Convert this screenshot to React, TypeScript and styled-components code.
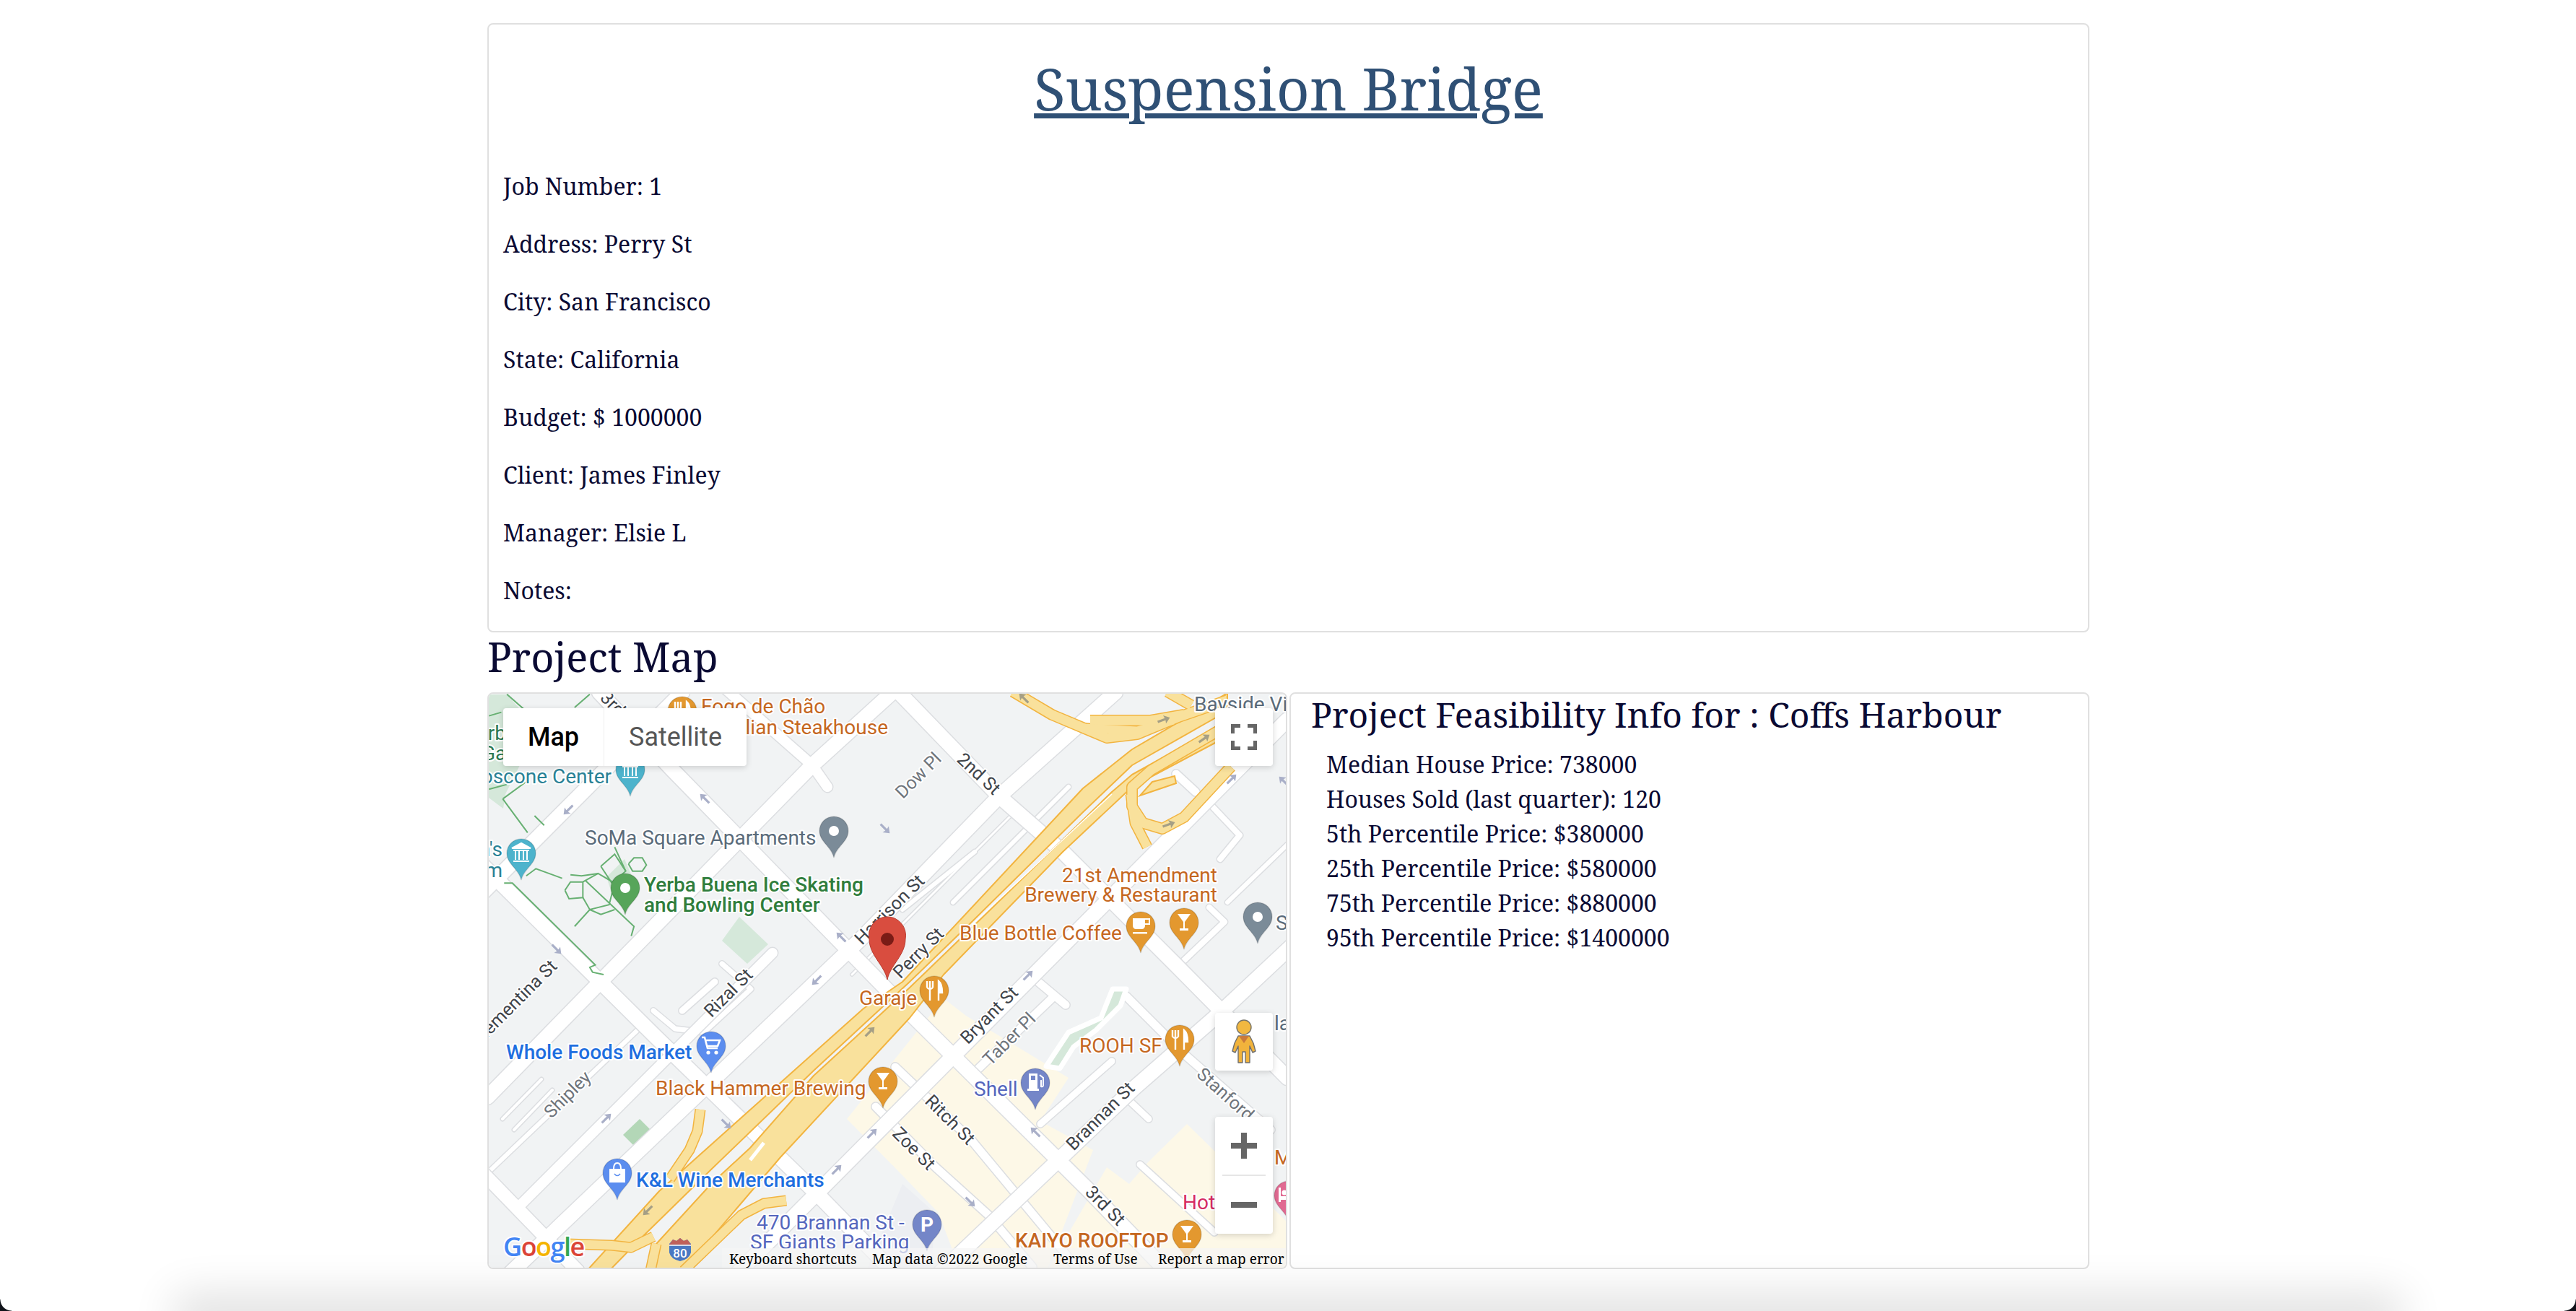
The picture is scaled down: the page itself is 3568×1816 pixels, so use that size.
import React from 'react'
import styled, { createGlobalStyle } from 'styled-components'

const serif = `"Noto Serif", "DejaVu Serif Condensed", "DejaVu Serif", serif`

const GlobalStyle = createGlobalStyle`
  html, body {
    margin: 0;
    padding: 0;
    background: #fff;
    overflow: hidden;
  }
  body {
    font-family: ${serif};
    color: #0a0a33;
  }
`

const Page = styled.div`
  position: relative;
  width: 3568px;
  height: 1816px;
  overflow: hidden;
  padding-top: 32px;
  box-sizing: border-box;
`
const Container = styled.div`
  width: 2219px;
  margin-left: 675px;
`
const Panel = styled.div`
  border: 2px solid #e0e0e0;
  border-radius: 8px;
  box-sizing: border-box;
  background: #fff;
`
const JobCard = styled(Panel)`
  height: 844px;
  padding: 0 20px;
`
const Title = styled.h1`
  margin: 0;
  height: 200px;
  padding-top: 33px;
  box-sizing: border-box;
  font-size: 80px;
  line-height: 110px;
  font-weight: 400;
  text-align: center;
  color: #2f5075;
  text-decoration: underline;
  text-decoration-thickness: 7px;
  text-underline-offset: 4px;
`
const Field = styled.p`
  margin: 0 0 32px;
  font-size: 32px;
  line-height: 48px;
`
const SectionTitle = styled.h2`
  margin: 0;
  height: 83px;
  font-size: 56px;
  line-height: 66px;
  font-weight: 400;
`
const Columns = styled.div`
  display: grid;
  grid-template-columns: 1108px 1108px;
  gap: 3px;
  height: 799px;
`
const MapPanel = styled(Panel)`
  position: relative;
  overflow: hidden;
`
const MapCanvas = styled.svg`
  display: block;
  width: 1104px;
  height: 795px;
  background: #f1f3f4;
`
const MapSwitch = styled.div`
  position: absolute;
  left: 20px;
  top: 20px;
  display: flex;
  height: 80px;
  border-radius: 4px;
  background: #fff;
  box-shadow: 0 2px 8px rgba(0, 0, 0, 0.16);
`
const SwitchTab = styled.div<{ $active?: boolean }>`
  display: flex;
  align-items: center;
  justify-content: center;
  width: ${({ $active }) => ($active ? '139px' : '197px')};
  font-family: Roboto, sans-serif;
  font-size: 36px;
  font-weight: ${({ $active }) => ($active ? 500 : 400)};
  color: ${({ $active }) => ($active ? '#000' : '#565656')};
  border-right: ${({ $active }) => ($active ? '1px solid #eee' : 'none')};
`
const ControlBox = styled.div`
  display: flex;
  align-items: center;
  justify-content: center;
  width: 80px;
  height: 80px;
  border-radius: 4px;
  background: #fff;
  box-shadow: 0 2px 8px rgba(0, 0, 0, 0.16);
`
const FullscreenBox = styled(ControlBox)`
  position: absolute;
  right: 18px;
  top: 20px;
`
const SideControls = styled.div`
  position: absolute;
  right: 18px;
  bottom: 47px;
  display: flex;
  flex-direction: column;
  gap: 64px;
`
const ZoomBox = styled(ControlBox)`
  height: 162px;
  flex-direction: column;
  justify-content: flex-start;
`
const ZoomButton = styled.div`
  display: flex;
  align-items: center;
  justify-content: center;
  width: 60px;
  height: 81px;
`
const ZoomDivider = styled.div`
  width: 60px;
  height: 2px;
  background: #e6e6e6;
`
const Attribution = styled.div`
  position: absolute;
  left: 323px;
  right: 0;
  bottom: 0;
  height: 27px;
  display: flex;
  align-items: center;
  box-sizing: border-box;
  padding: 3px 0 0 10px;
  background: rgba(245, 245, 245, 0.72);
  font-size: 19px;
  color: #000;
  white-space: nowrap;
`
const AttrItem = styled.span<{ $width: number }>`
  width: ${({ $width }) => $width}px;
  flex: none;
`
const InfoPanel = styled(Panel)`
  padding: 0 28px;
`
const InfoTitle = styled.h4`
  margin: 0;
  font-size: 48px;
  line-height: 57px;
  font-weight: 400;
`
const InfoList = styled.ul`
  margin: 17px 0 0;
  padding: 0 0 0 21px;
  list-style: none;
  font-size: 32px;
  line-height: 48px;
`
const BottomShade = styled.div`
  position: absolute;
  left: 270px;
  right: 270px;
  bottom: -14px;
  height: 10px;
  box-shadow: 0 0 60px 28px rgba(0, 0, 0, 0.12);
`
const Corner = styled.div<{ $right?: boolean }>`
  position: absolute;
  bottom: 0;
  ${({ $right }) => ($right ? 'right: 0;' : 'left: 0;')}
  width: 16px;
  height: 16px;
  background: radial-gradient(
    circle at ${({ $right }) => ($right ? '0 0' : '100% 0')},
    transparent 15px,
    #10131a 16px
  );
`

const Label = styled.text<{ $color: string; $weight?: number }>`
  font-family: Roboto, sans-serif;
  font-size: 28px;
  font-weight: ${({ $weight }) => $weight || 400};
  fill: ${({ $color }) => $color};
  stroke: #fff;
  stroke-width: 4px;
  stroke-linejoin: round;
  paint-order: stroke;
`
const RoadLabel = styled.text<{ $light?: boolean }>`
  font-family: Roboto, sans-serif;
  font-size: 25px;
  font-weight: 400;
  fill: ${({ $light }) => ($light ? '#6f757c' : '#3f444a')};
  stroke: #fff;
  stroke-width: 4px;
  stroke-linejoin: round;
  paint-order: stroke;
`
const GoogleMark = styled.text`
  font-family: "Open Sans", Roboto, sans-serif;
  font-size: 36px;
  font-weight: 600;
  letter-spacing: -1.5px;
  stroke: #fff;
  stroke-width: 4px;
  stroke-linejoin: round;
  paint-order: stroke;
`
const ShieldText = styled.text`
  font-family: Roboto, sans-serif;
  font-size: 17px;
  font-weight: 500;
  fill: #fff;
  text-anchor: middle;
`
const PinLetter = styled.text`
  font-family: Roboto, sans-serif;
  font-size: 28px;
  font-weight: 700;
  fill: #fff;
  text-anchor: middle;
`

const ORANGE = '#c5671f'
const BLUE = '#1f6fe0'
const PURPLE = '#5466bd'
const TEAL = '#2a8296'
const SLATE = '#5a6b7a'

// [d, width]
const ROADS: [string, number][] = [
  ['M640 1265L945 959', 20],
  ['M675 1520L1125 1060L1236 959', 20],
  ['M700 1770L955 1527L1196 1297L1384 1103L1545 959', 20],
  ['M1020 1765L1783 997', 20],
  ['M1300 1765L1571 1507L1690 1403L1800 1300', 20],
  ['M830 959L932 1067L1250 1393L1506 1647L1620 1765', 20],
  ['M1245 959L1384 1103L1472 1180L1629 1337L1783 1493', 20],
  ['M670 1200L909 1437L1135 1657L1240 1765', 20],
  ['M672 1628L800 1760', 18],
  ['M1000 950L1125 1060L1146 1090', 14],
  ['M720 1670L1070 1320', 14],
]
const MINOR_ROADS: [string, number][] = [
  ['M675 1625L885 1425', 6],
  ['M1240 1478L1284 1520L1346 1580L1468 1727L1490 1755', 11],
  ['M1213 1533L1296 1617L1369 1683L1430 1755', 11],
  ['M1560 1380L1640 1460L1760 1565', 11],
  ['M1345 1490L1460 1380', 11],
  ['M1441 1557L1540 1470', 9],
  ['M1556 1517L1591 1550', 9],
  ['M1579 1613L1682 1707', 9],
  ['M1629 1072L1656 1097', 11],
  ['M1679 1117L1717 1157L1690 1190', 8],
  ['M1675 1257L1696 1277L1633 1337', 8],
  ['M1426 1350L1476 1392', 11],
  ['M905 1400L935 1425L975 1430L1040 1370L1000 1335', 7],
  ['M990 1360L945 1400', 9],
  ['M696 1550L750 1495', 4],
  ['M712 1565L765 1510', 4],
  ['M1180 1350L1400 1130', 3],
  ['M1700 1250L1783 1170', 6],
  ['M1250 1260L1350 1180', 6],
  ['M1320 1250L1480 1090', 6],
]
const RAMPS: [string, number][] = [
  ['M1403 958L1457 990L1533 1022L1575 1017L1633 993L1700 970', 13],
  ['M1617 958L1650 977', 13],
  ['M1510 998L1594 998L1640 990', 13],
  ['M1500 1008L1575 1012L1625 998', 11],
  ['M1700 1005L1594 1067L1568 1090L1568 1117L1583 1140L1610 1148L1640 1132L1705 1062', 13],
  ['M1566 1100L1572 1140L1589 1173', 12],
  ['M970 1537L966 1567L955 1593L928 1633', 12],
  ['M1089 1663L1058 1667L1027 1683L947 1760', 12],
  ['M786 1723L847 1725L874 1728L905 1713', 12],
  ['M909 1723L901 1760', 12],
]
const TRUNK_UPPER =
  'M813 1760L913 1650L1196 1397L1250 1360L1500 1092L1568 1038L1633 1000L1700 960L1700 985L1568 1060L1500 1125L1346 1277L1260 1360L1127 1483L985 1620L890 1713L844 1760Z'
const TRUNK_LOWER =
  'M901 1760L909 1723L985 1640L1039 1590L1127 1490L1260 1368L1346 1285L1540 1097L1568 1073L1700 1000L1700 1020L1568 1090L1472 1180L1307 1350L1260 1410L1081 1603L947 1760Z'

// [x, y, angle] of the one way arrows, angle 0 points up
const ARROWS: [number, number, number][] = [
  [787, 1122, 225], [976, 1106, 315], [1226, 1148, 135], [771, 1315, 135],
  [1165, 1298, 315], [1131, 1358, 225], [840, 1549, 45], [1006, 1557, 135],
  [1208, 1570, 45], [1159, 1620, 45], [1434, 1568, 315], [1344, 1665, 135],
  [1706, 1079, 45], [1778, 1082, 315], [1424, 1351, 45],
]
const FREEWAY_ARROWS: [number, number, number][] = [
  [1418, 967, 315], [1612, 997, 70], [1668, 1023, 55], [1619, 1142, 70],
  [1205, 1429, 45], [897, 1677, 225],
]

const PIN_PATH = 'M0 0C-3 -15 -20 -22 -20 -37A20 20 0 1 1 20 -37C20 -22 3 -15 0 0Z'

const Pin = ({ x, y, color, children }: { x: number; y: number; color: string; children?: React.ReactNode }) => (
  <g transform={`translate(${x} ${y})`}>
    <path d={PIN_PATH} fill={color} stroke="rgba(0,0,0,0.12)" strokeWidth={1.5} />
    {children}
  </g>
)

const Dot = () => <circle cy={-37} r={7} fill="#fff" />
const Cutlery = () => (
  <g fill="none" stroke="#fff" strokeWidth={2.4}>
    <path d="M-10 -50v9M-6 -50v10M-2 -50v9M-10 -41q4 4 8 0M-6 -38v15" />
    <path d="M6 -23V-50q5 4 5 16h-5" fill="#fff" />
  </g>
)
const Glass = () => (
  <path d="M-9 -49H9L1 -38V-29H6V-26H-6V-29H-1V-38Z" fill="#fff" />
)
const Cup = () => (
  <g fill="#fff">
    <path d="M-11 -48H6V-38Q6 -33 1 -33H-6Q-11 -33 -11 -38Z" />
    <path d="M6 -47H12V-40H6" fill="none" stroke="#fff" strokeWidth={2} />
    <rect x={-11} y={-29} width={20} height={2.5} />
  </g>
)
const Cart = () => (
  <g>
    <path d="M-13 -49h4l4 15h14M-7 -45h19l-3 8h-14" fill="none" stroke="#fff" strokeWidth={2.6} />
    <circle cx={-4} cy={-28} r={2.6} fill="#fff" />
    <circle cx={7} cy={-28} r={2.6} fill="#fff" />
  </g>
)
const Bag = () => (
  <g>
    <rect x={-11} y={-43} width={22} height={19} fill="#fff" />
    <path d="M-5 -43q0 -8 5 -8t5 8" fill="none" stroke="#fff" strokeWidth={2} />
    <path d="M-4 -36q4 5 8 0" fill="none" stroke="#5b8def" strokeWidth={1.6} />
  </g>
)
const Museum = () => (
  <g fill="none" stroke="#fff" strokeWidth={2}>
    <path d="M-13 -44L0 -51L13 -44Z" fill="#fff" />
    <path d="M-11 -26H11M-8 -41V-28M-3 -41V-28M3 -41V-28M8 -41V-28M-11 -41H11" />
  </g>
)
const Fuel = () => (
  <g fill="#fff">
    <path d="M-9 -50H3V-29H5V-26H-11V-29H-9ZM-6 -47V-41H0V-47Z" fillRule="evenodd" />
    <path d="M6 -48L11 -44V-34Q11 -31 8 -32V-41" fill="none" stroke="#fff" strokeWidth={2} />
  </g>
)
const Bed = () => (
  <g fill="#fff">
    <rect x={-14} y={-48} width={3} height={20} />
    <rect x={-11} y={-36} width={24} height={5} />
    <circle cx={-6} cy={-41} r={3.5} />
    <rect x={-1} y={-44} width={14} height={8} />
  </g>
)

const Road = ({ z }: { z: [string, number][] }) => (
  <>
    {z.map(([d, w]) => (
      <path key={`c${d}`} d={d} fill="none" stroke="#dcdee1" strokeWidth={w + 3} strokeLinecap="round" strokeLinejoin="round" />
    ))}
    {z.map(([d, w]) => (
      <path key={d} d={d} fill="none" stroke="#fff" strokeWidth={w} strokeLinecap="round" strokeLinejoin="round" />
    ))}
  </>
)

const Arrow = ({ x, y, angle, color }: { x: number; y: number; angle: number; color: string }) => (
  <path
    transform={`translate(${x} ${y}) rotate(${angle})`}
    d="M0 -9L6 -1L1.6 -2L1.6 9L-1.6 9L-1.6 -2L-6 -1Z"
    fill={color}
  />
)

const StreetMap = () => (
  <MapCanvas viewBox="677 961 1104 795">
    {/* built up blocks */}
    <g fill="#fdf8e7">
      <path d="M1173 1550L1307 1383L1338 1407L1480 1493L1441 1553L1514 1593L1450 1760L1330 1760L1300 1680L1245 1623Z" />
      <path d="M1590 1610L1644 1557L1785 1695L1785 1760L1450 1760L1533 1617L1564 1640Z" />
    </g>
    <path d="M1250 1640L1295 1680L1290 1760L1200 1760Z" fill="#eceef2" />
    {/* parks */}
    <g fill="#d5e8da">
      <path d="M677 962L702 962L745 1010L700 1100L697 1120L677 1105Z" />
      <path d="M1000 1303L1024 1270L1064 1308L1035 1335Z" />
      <path d="M840 1215L865 1190L880 1225L850 1245Z" />
    </g>
    <path d="M863 1572L886 1550L901 1565L878 1587Z" fill="#b3d7b7" />
    <Road z={MINOR_ROADS} />
    <Road z={ROADS} />
    <path
      d="M1449 1477L1480 1430L1525 1410L1541 1370L1560 1370L1552 1393L1518 1427L1487 1450L1468 1480Z"
      fill="#d5e8da"
      stroke="#fff"
      strokeWidth={7}
      strokeLinejoin="round"
    />
    {/* trails round the gardens, in zoom crop units */}
    <g
      transform="translate(660 860) scale(0.3827 0.3333)"
      fill="none"
      stroke="#67b072"
      strokeWidth={2}
    >
      <path vectorEffect="non-scaling-stroke" d="M95 740L185 880M110 305L170 365M410 305L355 360M210 810L245 850M45 395L90 380M95 740L190 660M45 700L110 680" />
      <path vectorEffect="non-scaling-stroke" d="M100 1090L130 1090L430 1430L410 1440L420 1460L460 1470M180 1060L215 1030L310 1070M340 1055L380 1060L440 1050" />
      <path vectorEffect="non-scaling-stroke" d="M550 1010L570 985L600 985L615 1015L600 1040L565 1040L550 1010M450 1020L500 970L540 1040L490 1090L450 1020M320 1120L340 1085L385 1085L385 1150L335 1155L320 1120" />
      <path vectorEffect="non-scaling-stroke" d="M385 1085L440 1050L500 1090L480 1180L410 1200L385 1150M355 1270L410 1200L450 1220L500 1200M395 1080L570 1270L560 1310M500 940L540 1040" />
    </g>
    <g fill="#f9e19c" stroke="#f2b440" strokeWidth={2} strokeLinejoin="round">
      <path d={TRUNK_UPPER} />
      <path d={TRUNK_LOWER} />
    </g>
    {RAMPS.map(([d, w]) => (
      <path key={`o${d}`} d={d} fill="none" stroke="#f2b440" strokeWidth={w + 3} strokeLinejoin="round" />
    ))}
    {RAMPS.map(([d, w]) => (
      <path key={d} d={d} fill="none" stroke="#f9e19c" strokeWidth={w} strokeLinejoin="round" />
    ))}
    <path d="M1596 1083L1627 1075L1629 1085L1579 1102Z" fill="#f9e19c" stroke="#f2b440" strokeWidth={2} />
    <path d="M1039 1607L1058 1583" stroke="#fff" strokeWidth={5} />
    <path d="M1346 1281L1540 1100" stroke="#fff" strokeWidth={1.5} />
    {ARROWS.map(([x, y, a]) => (
      <Arrow key={`${x}${y}`} x={x} y={y} angle={a} color="#a9afc8" />
    ))}
    {FREEWAY_ARROWS.map(([x, y, a]) => (
      <Arrow key={`${x}${y}`} x={x} y={y} angle={a} color="#a59f85" />
    ))}

    {/* interstate shield */}
    <path d="M927 1723L932 1717L937 1719L942 1715L947 1719L952 1717L957 1723L957 1735Q955 1744 942 1747Q929 1744 927 1735Z" fill="#4a78c2" />
    <path d="M927 1724L932 1717L937 1719L942 1715L947 1719L952 1717L957 1724Z" fill="#c0605a" />
    <path d="M927 1725H957" stroke="#fff" strokeWidth={1.5} />
    <ShieldText x={942} y={1742}>80</ShieldText>

    <RoadLabel x={1350} y={1078} textAnchor="middle" transform="rotate(43 1350 1078)">2nd St</RoadLabel>
    <RoadLabel $light x={1278} y={1080} textAnchor="middle" transform="rotate(-45 1278 1080)">Dow Pl</RoadLabel>
    <RoadLabel x={1238} y={1266} textAnchor="middle" transform="rotate(-45 1238 1266)">Harrison St</RoadLabel>
    <RoadLabel x={1278} y={1326} textAnchor="middle" transform="rotate(-45 1278 1326)">Perry St</RoadLabel>
    <RoadLabel x={830} y={968} transform="rotate(45 830 968)">3rd St</RoadLabel>
    <RoadLabel x={1044} y={1352} textAnchor="end" transform="rotate(-45 1044 1352)">Rizal St</RoadLabel>
    <RoadLabel x={773} y={1340} textAnchor="end" transform="rotate(-45 773 1340)">Clementina St</RoadLabel>
    <RoadLabel $light x={792} y={1522} textAnchor="middle" transform="rotate(-45 792 1522)">Shipley</RoadLabel>
    <RoadLabel x={1376} y={1412} textAnchor="middle" transform="rotate(-45 1376 1412)">Bryant St</RoadLabel>
    <RoadLabel $light x={1404} y={1445} textAnchor="middle" transform="rotate(-45 1404 1445)">Taber Pl</RoadLabel>
    <RoadLabel x={1530} y={1552} textAnchor="middle" transform="rotate(-45 1530 1552)">Brannan St</RoadLabel>
    <RoadLabel x={1310} y={1557} textAnchor="middle" transform="rotate(45 1310 1557)">Ritch St</RoadLabel>
    <RoadLabel x={1260} y={1597} textAnchor="middle" transform="rotate(45 1260 1597)">Zoe St</RoadLabel>
    <RoadLabel x={1525} y={1676} textAnchor="middle" transform="rotate(45 1525 1676)">3rd St</RoadLabel>
    <RoadLabel $light x={1656} y={1490} transform="rotate(42 1656 1490)">Stanford St</RoadLabel>

    <Pin x={1155} y={1188} color="#7b8b98"><Dot /></Pin>
    <Pin x={866} y={1267} color="#57a55a"><Dot /></Pin>
    <Pin x={873} y={1103} color="#4db3cc"><Museum /></Pin>
    <Pin x={722} y={1219} color="#4db3cc"><Museum /></Pin>
    <Pin x={945} y={1022} color="#e3982f"><Cutlery /></Pin>
    <Pin x={1580} y={1320} color="#e3982f"><Cup /></Pin>
    <Pin x={1640} y={1315} color="#e3982f"><Glass /></Pin>
    <Pin x={1742} y={1307} color="#7b8b98"><Dot /></Pin>
    <Pin x={1294} y={1409} color="#e3982f"><Cutlery /></Pin>
    <Pin x={985} y={1486} color="#5b8def"><Cart /></Pin>
    <Pin x={1223} y={1535} color="#e3982f"><Glass /></Pin>
    <Pin x={855} y={1662} color="#5b8def"><Bag /></Pin>
    <Pin x={1434} y={1537} color="#7486c8"><Fuel /></Pin>
    <Pin x={1634} y={1477} color="#e3982f"><Cutlery /></Pin>
    <Pin x={1284} y={1733} color="#7486c8"><PinLetter y={-27}>P</PinLetter></Pin>
    <Pin x={1644} y={1747} color="#e3982f"><Glass /></Pin>
    <Pin x={1785} y={1693} color="#e06a92"><Bed /></Pin>

    <Label $color={ORANGE} x={971} y={988}>Fogo de Chão</Label>
    <Label $color={ORANGE} x={1230} y={1017} textAnchor="end">Brazilian Steakhouse</Label>
    <Label $color="#2c7a54" x={645} y={1025}>Yerba Buena</Label>
    <Label $color="#2c7a54" x={667} y={1053}>Gardens</Label>
    <Label $color={TEAL} x={847} y={1085} textAnchor="end">Moscone Center</Label>
    <Label $color={TEAL} x={696} y={1186} textAnchor="end">Children's</Label>
    <Label $color={TEAL} x={696} y={1215} textAnchor="end">Museum</Label>
    <Label $color={SLATE} x={810} y={1170}>SoMa Square Apartments</Label>
    <Label $color="#2f7d3c" $weight={500} x={892} y={1235}>Yerba Buena Ice Skating</Label>
    <Label $color="#2f7d3c" $weight={500} x={892} y={1263}>and Bowling Center</Label>
    <Label $color={SLATE} x={1654} y={985}>Bayside Village</Label>
    <Label $color={ORANGE} x={1686} y={1222} textAnchor="end">21st Amendment</Label>
    <Label $color={ORANGE} x={1686} y={1249} textAnchor="end">Brewery &amp; Restaurant</Label>
    <Label $color={ORANGE} x={1329} y={1302}>Blue Bottle Coffee</Label>
    <Label $color={SLATE} x={1767} y={1288}>South</Label>
    <Label $color={SLATE} x={1765} y={1427}>la</Label>
    <Label $color={ORANGE} x={1190} y={1392}>Garaje</Label>
    <Label $color={BLUE} $weight={500} x={701} y={1467}>Whole Foods Market</Label>
    <Label $color={ORANGE} x={908} y={1517}>Black Hammer Brewing</Label>
    <Label $color={BLUE} $weight={500} x={881} y={1644}>K&amp;L Wine Merchants</Label>
    <Label $color={PURPLE} x={1048} y={1703}>470 Brannan St -</Label>
    <Label $color={PURPLE} x={1039} y={1730}>SF Giants Parking</Label>
    <Label $color={PURPLE} x={1349} y={1518}>Shell</Label>
    <Label $color={ORANGE} x={1495} y={1458}>ROOH SF</Label>
    <Label $color={ORANGE} $weight={500} x={1406} y={1728}>KAIYO ROOFTOP</Label>
    <Label $color="#d52c63" x={1638} y={1675}>Hotel</Label>
    <Label $color={ORANGE} x={1765} y={1613}>M</Label>

    {/* red project marker */}
    <g transform="translate(1229 1357)">
      <path d="M0 0C-4 -20 -25 -34 -25 -56A25.5 26 0 1 1 25 -56C25 -34 4 -20 0 0Z" fill="#d94d3f" stroke="#b93a2e" strokeWidth={1} />
      <circle cy={-56} r={9} fill="#7a1c16" />
    </g>

    <GoogleMark x={697} y={1740}>
      <tspan fill="#4285f4">G</tspan>
      <tspan fill="#db4437">o</tspan>
      <tspan fill="#f4b400">o</tspan>
      <tspan fill="#4285f4">g</tspan>
      <tspan fill="#34a853">l</tspan>
      <tspan fill="#db4437">e</tspan>
    </GoogleMark>
  </MapCanvas>
)

const FullscreenIcon = () => (
  <svg width="36" height="36" viewBox="0 0 36 36" fill="none" stroke="#666" strokeWidth="5">
    <path d="M2.5 13V2.5H13M23 2.5H33.5V13M33.5 23V33.5H23M13 33.5H2.5V23" />
  </svg>
)

const Pegman = () => (
  <svg width="36" height="62" viewBox="0 0 36 62">
    <circle cx="18" cy="11" r="10" fill="#f2b840" stroke="#77746a" strokeWidth="1.4" />
    <path
      d="M10 23H26L31 33L34 44L30 46L26 37V60H20V45H16V60H10V37L6 46L2 44L5 33Z"
      fill="#f1b33c"
      stroke="#6f6f6f"
      strokeWidth="1.4"
      strokeLinejoin="round"
    />
    <path d="M11 23H25L18 33Z" fill="#c9793c" />
  </svg>
)

const PlusIcon = () => (
  <svg width="36" height="36" viewBox="0 0 36 36" fill="#666">
    <path d="M14 0H22V14H36V22H22V36H14V22H0V14H14Z" />
  </svg>
)
const MinusIcon = () => (
  <svg width="36" height="8" viewBox="0 0 36 8" fill="#666">
    <rect width="36" height="8" />
  </svg>
)

const FIELDS = [
  'Job Number: 1',
  'Address: Perry St',
  'City: San Francisco',
  'State: California',
  'Budget: $ 1000000',
  'Client: James Finley',
  'Manager: Elsie L',
  'Notes:',
]
const FEASIBILITY = [
  'Median House Price: 738000',
  'Houses Sold (last quarter): 120',
  '5th Percentile Price: $380000',
  '25th Percentile Price: $580000',
  '75th Percentile Price: $880000',
  '95th Percentile Price: $1400000',
]

const App: React.FC = () => {
  return (
    <Page>
      <GlobalStyle />
      <Container>
        <JobCard>
          <Title>Suspension Bridge</Title>
          {FIELDS.map((item) => (
            <Field key={item}>{item}</Field>
          ))}
        </JobCard>
        <SectionTitle>Project Map</SectionTitle>
        <Columns>
          <MapPanel>
            <StreetMap />
            <MapSwitch>
              <SwitchTab $active>Map</SwitchTab>
              <SwitchTab>Satellite</SwitchTab>
            </MapSwitch>
            <FullscreenBox>
              <FullscreenIcon />
            </FullscreenBox>
            <SideControls>
              <ControlBox>
                <Pegman />
              </ControlBox>
              <ZoomBox>
                <ZoomButton>
                  <PlusIcon />
                </ZoomButton>
                <ZoomDivider />
                <ZoomButton>
                  <MinusIcon />
                </ZoomButton>
              </ZoomBox>
            </SideControls>
            <Attribution>
              <AttrItem $width={198}>Keyboard shortcuts</AttrItem>
              <AttrItem $width={251}>Map data ©2022 Google</AttrItem>
              <AttrItem $width={145}>Terms of Use</AttrItem>
              <AttrItem $width={170}>Report a map error</AttrItem>
            </Attribution>
          </MapPanel>
          <InfoPanel>
            <InfoTitle>Project Feasibility Info for : Coffs Harbour</InfoTitle>
            <InfoList>
              {FEASIBILITY.map((item) => (
                <li key={item}>{item}</li>
              ))}
            </InfoList>
          </InfoPanel>
        </Columns>
      </Container>
      <BottomShade />
      <Corner />
      <Corner $right />
    </Page>
  )
}

export default App
